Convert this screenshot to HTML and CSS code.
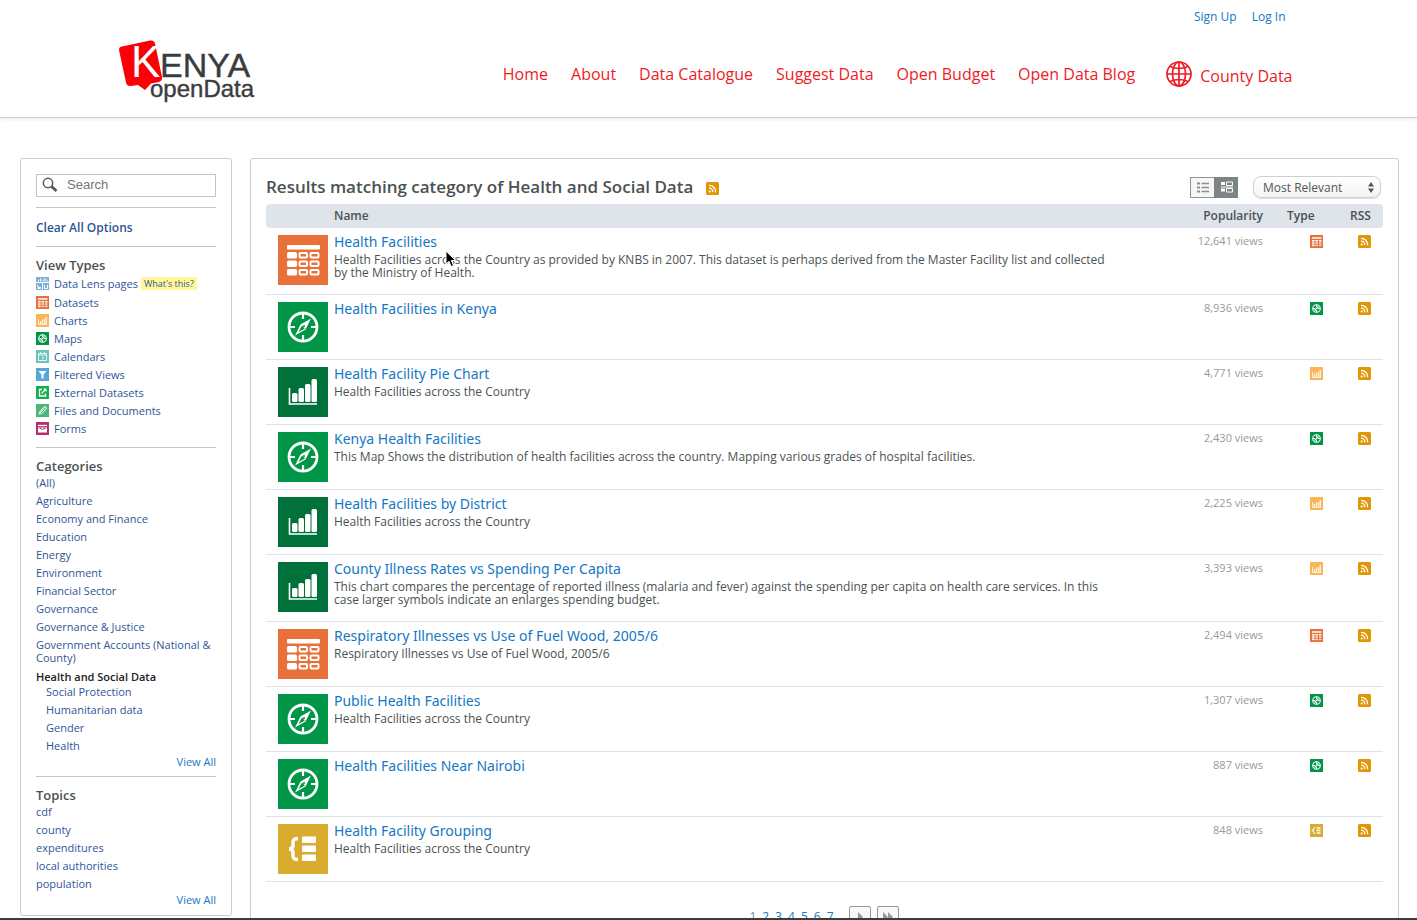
FILE: index.html
```html
<!DOCTYPE html>
<html lang="en">
<head>
<meta charset="utf-8">
<title>Kenya Open Data - Health and Social Data</title>
<link rel="stylesheet" href="styles.css">
</head>
<body>
<svg class="sprite" aria-hidden="true">
  <symbol id="table" viewBox="0 0 50 50"><rect width="50" height="50" fill="#e87039"/><g fill="#fff"><rect x="9" y="10" width="33" height="4.500" rx="1"/><rect x="9" y="17" width="10" height="6.500" rx="1.500"/><rect x="9" y="25.500" width="10" height="6.500" rx="1.500"/><rect x="9" y="34" width="10" height="6.500" rx="1.500"/></g><g fill="none" stroke="#fff" stroke-width="2"><rect x="21.500" y="18" width="7.500" height="4.500" rx="1"/><rect x="32.500" y="18" width="8" height="4.500" rx="1"/><rect x="21.500" y="26.500" width="7.500" height="4.500" rx="1"/><rect x="32.500" y="26.500" width="8" height="4.500" rx="1"/><rect x="21.500" y="35" width="7.500" height="4.500" rx="1"/><rect x="32.500" y="35" width="8" height="4.500" rx="1"/></g></symbol>
  <symbol id="compass" viewBox="0 0 50 50"><rect width="50" height="50" fill="#009547"/><circle cx="25" cy="25" r="14" fill="none" stroke="#fff" stroke-width="2.800"/><path d="M25 11v6M25 33v6M11 25h6M33 25h6" stroke="#fff" stroke-width="2.200"/><path d="M33 16.500L27.500 27.500 17 33.500 22.500 22.500z" fill="#fff"/><path d="M24 23.500l3 3-6.500 3.600z" fill="#009547"/><circle cx="26" cy="24" r="1" fill="#009547"/></symbol>
  <symbol id="bars" viewBox="0 0 50 50"><rect width="50" height="50" fill="#00713b"/><path d="M11.500 21v16h27.500" fill="none" stroke="#fff" stroke-width="1.600"/><g fill="#fff"><rect x="14" y="26" width="5.500" height="9" rx="1.500"/><rect x="20.500" y="21" width="5.500" height="14" rx="1.500"/><rect x="27" y="17" width="5.500" height="18" rx="1.500"/><rect x="33.500" y="12" width="5.500" height="23" rx="1.500"/></g></symbol>
  <symbol id="group" viewBox="0 0 50 50"><rect width="50" height="50" fill="#d9ab2f"/><path d="M20 14.500c-4 0-5 1-5 4v2.500c0 2.500-1 4-4 4 3 0 4 1.500 4 4v2.500c0 3 1 4 5 4" fill="none" stroke="#fff" stroke-width="3.500"/><g fill="#fff"><rect x="24" y="12.500" width="14" height="6.500" rx="1"/><rect x="24" y="21.500" width="14" height="6.500" rx="1"/><rect x="24" y="30.500" width="14" height="6.500" rx="1"/></g></symbol>
  <symbol id="s-lens" viewBox="0 0 13 13"><rect width="13" height="13" fill="#7fb0d4"/><path d="M0 5.500h13M6.500 6v7" stroke="#fff"/><path d="M2.500 2.500v2M4.500 1.500v3M7 2.500v2M9 1v3.500M11 2.500v2" stroke="#fff"/><path d="M1.500 8l1 3 1.500-1 1 1.500M1.500 11.500h3" stroke="#fff" fill="none"/><path d="M8.500 8v3.500h3V8" stroke="#fff" fill="none"/></symbol>
  <symbol id="s-table" viewBox="0 0 13 13"><rect width="13" height="13" fill="#e87039"/><path d="M2 3h9.500" stroke="#fff" stroke-width="1.500"/><g fill="#fff"><rect x="2" y="5" width="2.600" height="1.500"/><rect x="5.400" y="5" width="2.600" height="1.500"/><rect x="8.900" y="5" width="2.600" height="1.500"/><rect x="2" y="7.300" width="2.600" height="1.500"/><rect x="2" y="9.600" width="2.600" height="1.500"/></g><g fill="#fff" opacity=".75"><rect x="5.400" y="7.300" width="2.600" height="1.500"/><rect x="8.900" y="7.300" width="2.600" height="1.500"/><rect x="5.400" y="9.600" width="2.600" height="1.500"/><rect x="8.900" y="9.600" width="2.600" height="1.500"/></g></symbol>
  <symbol id="s-chart" viewBox="0 0 13 13"><rect width="13" height="13" fill="#f9b557"/><path d="M2.500 5v5.500h8.500" stroke="#fff" fill="none" opacity=".8"/><path d="M4.500 7v3M6.500 5.500v4.500M8.500 5v5M10.300 3v7" stroke="#fff" stroke-width="1.300" opacity=".85"/></symbol>
  <symbol id="s-map" viewBox="0 0 13 13"><rect width="13" height="13" fill="#009547"/><circle cx="6.500" cy="6.500" r="3.800" fill="none" stroke="#fff" stroke-width="1.100"/><path d="M6.500 3v2M6.500 8v2M3 6.500h2M8 6.500h2" stroke="#fff"/><path d="M8.500 4.500l-4 4" stroke="#fff" stroke-width="1.200"/></symbol>
  <symbol id="s-cal" viewBox="0 0 13 13"><rect width="13" height="13" fill="#69c4bb"/><path d="M2.500 3.500h8v7h-8zM2.500 5h8M4.500 2v2M8.500 2v2M6 7h1v2.500" stroke="#fff" fill="none" opacity=".85"/></symbol>
  <symbol id="s-filter" viewBox="0 0 13 13"><rect width="13" height="13" fill="#54a7d8"/><path d="M2.500 3h8L7.500 6.800V10.500H5.500V6.800z" fill="#fff"/></symbol>
  <symbol id="s-ext" viewBox="0 0 13 13"><rect width="13" height="13" fill="#16ad50"/><path d="M6 3.500H3.500v6.500h6V7.500M5.500 7.500l4-4" stroke="#fff" stroke-width="1.300" fill="none"/><path d="M7 2.500h3.500V6z" fill="#fff"/></symbol>
  <symbol id="s-file" viewBox="0 0 13 13"><rect width="13" height="13" fill="#4bb877"/><path d="M3 10.500l1-3 4-4.500c1.500-1 3 .5 2 2L6 9.500c-1 .7-2 0-1.500-1l3.500-4" stroke="#fff" fill="none"/></symbol>
  <symbol id="s-form" viewBox="0 0 13 13"><rect width="13" height="13" fill="#b92d6e"/><path d="M2 3.500h9" stroke="#fff" stroke-width="1.300"/><rect x="2" y="5.500" width="9" height="5" fill="#fff"/><path d="M3.500 6.500h1.500l1.500 1 1.500-1h1.500" stroke="#b92d6e" fill="none"/></symbol>
  <symbol id="s-group" viewBox="0 0 13 13"><rect width="13" height="13" fill="#d9ab2f"/><path d="M5 3.500C3.500 3.500 4 6 2.500 6.500 4 7 3.500 9.500 5 9.500" stroke="#fff" stroke-width="1.200" fill="none"/><path d="M6.500 4h4M6.500 6.500h4M6.500 9h4" stroke="#fff" stroke-width="1.500"/></symbol>
  <symbol id="rss" viewBox="0 0 13 13"><rect width="13" height="13" rx="1.500" fill="#e09607"/><circle cx="3.700" cy="9.500" r="1.100" fill="#fff"/><path d="M3 6.200c2.200 0 3.800 1.600 3.800 4M3 3.300c4 0 6.700 2.900 6.700 6.900" stroke="#fff" stroke-width="1.300" fill="none"/></symbol>
</svg>

<header class="site-header">
  <div class="header-inner">
    <div class="account"><a href="#">Sign Up</a><a href="#">Log In</a></div>
    <div class="header-row">
      <a href="#" class="logo" aria-label="Kenya openData">
        <svg width="140" height="68" viewBox="0 0 140 68">
          <path d="M3 6.500L31 .6q4-.8 5 3L43 37q.6 4-3 5l-8 1.500-6 6.500-7-5-7 1q-4 .6-5-3.500L.2 11q-.8-4 2.800-4.500z" fill="#fb0007"/>
          <g font-family="Liberation Sans, sans-serif">
            <text x="12" y="37" font-size="44" fill="#fff">K</text>
            <text x="41" y="37" font-size="34" fill="#3b3c3e" stroke="#3b3c3e" stroke-width=".4">ENYA</text>
            <text x="31" y="57" font-size="24" fill="#3b3c3e" stroke="#3b3c3e" stroke-width=".4">openData</text>
          </g>
        </svg>
      </a>
      <nav class="main-nav">
        <a href="#">Home</a><a href="#">About</a><a href="#">Data Catalogue</a><a href="#">Suggest Data</a><a href="#">Open Budget</a><a href="#">Open Data Blog</a>
        <a href="#" class="county"><svg width="26" height="26" viewBox="0 0 26 26" fill="none" stroke="#ed1c24" stroke-width="1.700"><circle cx="13" cy="13" r="12"/><ellipse cx="13" cy="13" rx="6.500" ry="12"/><path d="M13 1v24M1 13h24M4 5.500q9 4 18 0M4 20.500q9-4 18 0"/></svg><span>County Data</span></a>
      </nav>
    </div>
  </div>
</header>

<div class="page">
  <aside class="sidebar panel">
    <form class="search">
      <svg width="18" height="16" viewBox="0 0 18 16"><circle cx="6" cy="6" r="4.700" fill="none" stroke="#555" stroke-width="1.500"/><path d="M9.500 9.500l5 4.500" stroke="#555" stroke-width="2.800"/></svg>
      <input type="search" placeholder="Search" aria-label="Search">
    </form>
    <a href="#" class="clear">Clear All Options</a>
    <section class="facet">
      <h2>View Types</h2>
      <ul class="types">
        <li><a href="#"><svg><use href="#s-lens"/></svg>Data Lens pages</a> <a href="#" class="what">What's this?</a></li>
        <li><a href="#"><svg><use href="#s-table"/></svg>Datasets</a></li>
        <li><a href="#"><svg><use href="#s-chart"/></svg>Charts</a></li>
        <li><a href="#"><svg><use href="#s-map"/></svg>Maps</a></li>
        <li><a href="#"><svg><use href="#s-cal"/></svg>Calendars</a></li>
        <li><a href="#"><svg><use href="#s-filter"/></svg>Filtered Views</a></li>
        <li><a href="#"><svg><use href="#s-ext"/></svg>External Datasets</a></li>
        <li><a href="#"><svg><use href="#s-file"/></svg>Files and Documents</a></li>
        <li><a href="#"><svg><use href="#s-form"/></svg>Forms</a></li>
      </ul>
    </section>
    <section class="facet">
      <h2>Categories</h2>
      <ul>
        <li><a href="#">(All)</a></li>
        <li><a href="#">Agriculture</a></li>
        <li><a href="#">Economy and Finance</a></li>
        <li><a href="#">Education</a></li>
        <li><a href="#">Energy</a></li>
        <li><a href="#">Environment</a></li>
        <li><a href="#">Financial Sector</a></li>
        <li><a href="#">Governance</a></li>
        <li><a href="#">Governance &amp; Justice</a></li>
        <li><a href="#">Government Accounts (National &amp; County)</a></li>
        <li class="current"><a href="#">Health and Social Data</a></li>
        <li class="sub"><a href="#">Social Protection</a></li>
        <li class="sub"><a href="#">Humanitarian data</a></li>
        <li class="sub"><a href="#">Gender</a></li>
        <li class="sub"><a href="#">Health</a></li>
      </ul>
      <a href="#" class="view-all">View All</a>
    </section>
    <section class="facet">
      <h2>Topics</h2>
      <ul>
        <li><a href="#">cdf</a></li>
        <li><a href="#">county</a></li>
        <li><a href="#">expenditures</a></li>
        <li><a href="#">local authorities</a></li>
        <li><a href="#">population</a></li>
      </ul>
      <a href="#" class="view-all">View All</a>
    </section>
  </aside>

  <main class="results panel">
    <div class="results-head">
      <h1>Results matching category of Health and Social Data</h1>
      <a href="#" class="head-feed" aria-label="RSS"><svg class="small"><use href="#rss"/></svg></a>
      <div class="view-toggle">
        <button type="button" aria-label="List view"><svg width="12" height="11" viewBox="0 0 12 11" stroke="#8b8f8f"><path d="M0 1.500h3M0 5.500h3M0 9.500h3" stroke-width="2"/><path d="M4.500 1.500H12M4.500 5.500H12M4.500 9.500H12" stroke-width="1.500"/></svg></button>
        <button type="button" class="on" aria-label="Rich view"><svg width="12" height="12" viewBox="0 0 12 12" fill="none" stroke="#fff"><path d="M0 2.500h4M0 9h4" stroke-width="3"/><path d="M5.500 1h6v3.500h-6zM5.500 7.500h6V11h-6zM0 6h12"/></svg></button>
      </div>
      <div class="sort">
        <select aria-label="Sort by"><option>Most Relevant</option><option>Most Accessed</option><option>Alphabetical</option></select>
        <svg width="8" height="11" viewBox="0 0 8 11" fill="#555"><path d="M4 0l3 4.500H1zM4 11L1 6.500h6z"/></svg>
      </div>
    </div>
    <table>
      <thead><tr><th class="thumb"></th><th class="name">Name</th><th class="pop">Popularity</th><th class="type">Type</th><th class="feed">RSS</th></tr></thead>
      <tbody>
        <tr><td class="thumb"><svg><use href="#table"/></svg></td><td class="name"><a href="#">Health Facilities</a><p>Health Facilities across the Country as provided by KNBS in 2007. This dataset is perhaps derived from the Master Facility list and collected by the Ministry of Health.</p></td><td class="pop">12,641 views</td><td class="type"><svg class="small"><use href="#s-table"/></svg></td><td class="feed"><a href="#" aria-label="RSS"><svg class="small"><use href="#rss"/></svg></a></td></tr>
        <tr><td class="thumb"><svg><use href="#compass"/></svg></td><td class="name"><a href="#">Health Facilities in Kenya</a></td><td class="pop">8,936 views</td><td class="type"><svg class="small"><use href="#s-map"/></svg></td><td class="feed"><a href="#" aria-label="RSS"><svg class="small"><use href="#rss"/></svg></a></td></tr>
        <tr><td class="thumb"><svg><use href="#bars"/></svg></td><td class="name"><a href="#">Health Facility Pie Chart</a><p>Health Facilities across the Country</p></td><td class="pop">4,771 views</td><td class="type"><svg class="small"><use href="#s-chart"/></svg></td><td class="feed"><a href="#" aria-label="RSS"><svg class="small"><use href="#rss"/></svg></a></td></tr>
        <tr><td class="thumb"><svg><use href="#compass"/></svg></td><td class="name"><a href="#">Kenya Health Facilities</a><p>This Map Shows the distribution of health facilities across the country. Mapping various grades of hospital facilities.</p></td><td class="pop">2,430 views</td><td class="type"><svg class="small"><use href="#s-map"/></svg></td><td class="feed"><a href="#" aria-label="RSS"><svg class="small"><use href="#rss"/></svg></a></td></tr>
        <tr><td class="thumb"><svg><use href="#bars"/></svg></td><td class="name"><a href="#">Health Facilities by District</a><p>Health Facilities across the Country</p></td><td class="pop">2,225 views</td><td class="type"><svg class="small"><use href="#s-chart"/></svg></td><td class="feed"><a href="#" aria-label="RSS"><svg class="small"><use href="#rss"/></svg></a></td></tr>
        <tr><td class="thumb"><svg><use href="#bars"/></svg></td><td class="name"><a href="#">County Illness Rates vs Spending Per Capita</a><p>This chart compares the percentage of reported illness (malaria and fever) against the spending per capita on health care services. In this case larger symbols indicate an enlarges spending budget.</p></td><td class="pop">3,393 views</td><td class="type"><svg class="small"><use href="#s-chart"/></svg></td><td class="feed"><a href="#" aria-label="RSS"><svg class="small"><use href="#rss"/></svg></a></td></tr>
        <tr><td class="thumb"><svg><use href="#table"/></svg></td><td class="name"><a href="#">Respiratory Illnesses vs Use of Fuel Wood, 2005/6</a><p>Respiratory Illnesses vs Use of Fuel Wood, 2005/6</p></td><td class="pop">2,494 views</td><td class="type"><svg class="small"><use href="#s-table"/></svg></td><td class="feed"><a href="#" aria-label="RSS"><svg class="small"><use href="#rss"/></svg></a></td></tr>
        <tr><td class="thumb"><svg><use href="#compass"/></svg></td><td class="name"><a href="#">Public Health Facilities</a><p>Health Facilities across the Country</p></td><td class="pop">1,307 views</td><td class="type"><svg class="small"><use href="#s-map"/></svg></td><td class="feed"><a href="#" aria-label="RSS"><svg class="small"><use href="#rss"/></svg></a></td></tr>
        <tr><td class="thumb"><svg><use href="#compass"/></svg></td><td class="name"><a href="#">Health Facilities Near Nairobi</a></td><td class="pop">887 views</td><td class="type"><svg class="small"><use href="#s-map"/></svg></td><td class="feed"><a href="#" aria-label="RSS"><svg class="small"><use href="#rss"/></svg></a></td></tr>
        <tr><td class="thumb"><svg><use href="#group"/></svg></td><td class="name"><a href="#">Health Facility Grouping</a><p>Health Facilities across the Country</p></td><td class="pop">848 views</td><td class="type"><svg class="small"><use href="#s-group"/></svg></td><td class="feed"><a href="#" aria-label="RSS"><svg class="small"><use href="#rss"/></svg></a></td></tr>
      </tbody>
    </table>
    <nav class="pager" aria-label="Pages">
      <span>1</span><a href="#">2</a><a href="#">3</a><a href="#">4</a><a href="#">5</a><a href="#">6</a><a href="#">7</a>
      <button type="button" aria-label="Next"><svg width="10" height="10" viewBox="0 0 10 10"><path d="M3 0l5 5-5 5z" fill="#9a9a9a"/></svg></button>
      <button type="button" aria-label="Last"><svg width="10" height="10" viewBox="0 0 10 10"><path d="M0 0l5 5-5 5zM5 0l5 5-5 5z" fill="#9a9a9a"/></svg></button>
    </nav>
  </main>
</div>
<svg class="pointer" width="12" height="19" viewBox="0 0 12 19"><path d="M1 1v13l3-2.700 2 5.200 2.500-1-2.200-5H10.500z" fill="#000" stroke="#fff"/></svg>
<div class="window-edge"></div>
</body>
</html>
```
FILE: styles.css
```css
* { box-sizing: border-box; }
body {
  margin: 0;
  height: 100vh;
  overflow: hidden;
  position: relative;
  background: #fff;
  color: #4a5252;
  font: 12px/13px "Open Sans", sans-serif;
}
a { color: #1478c4; text-decoration: none; }
h1, h2, p, ul { margin: 0; padding: 0; }
ul { list-style: none; }
button { padding: 0; font: inherit; }
svg { display: block; flex: none; }
.sprite { display: none; }
.small { width: 13px; height: 13px; }

.site-header {
  border-bottom: 1px solid #c9cdd0;
  box-shadow: 0 2px 3px #edf0f0;
}
.header-inner { max-width: 1180px; height: 117px; margin: 0 auto; }
.account {
  display: flex;
  justify-content: flex-end;
  gap: 15px;
  padding: 8px 13px 0 0;
  line-height: 18px;
}
.header-row {
  display: flex;
  justify-content: space-between;
  padding: 14px 6px 0 0;
}
.main-nav { display: flex; gap: 23px; padding-top: 20px; height: 50px; align-items: flex-start; }
.main-nav a { color: #ed1c24; font-size: 16px; line-height: 28px; white-space: nowrap; }
.main-nav .county { display: flex; align-items: center; gap: 8px; margin-left: 8px; }
.county span { padding-top: 2px; }
.county svg { margin-top: -2px; }

.page { display: flex; align-items: flex-start; gap: 18px; padding: 40px 18px 0 20px; }
.panel { border: 1px solid #ccc; border-radius: 3px; padding: 15px; }
.sidebar { width: 212px; flex: none; padding-bottom: 9px; }
.sidebar a { color: #2f5597; }
.search {
  display: flex;
  align-items: center;
  height: 23px;
  margin-bottom: 10px;
  padding-left: 5px;
  border: 1px solid #c4c4c4;
}
.search svg { margin-bottom: 2px; }
.search input {
  flex: 1;
  min-width: 0;
  margin-left: 7px;
  margin-bottom: 2px;
  padding: 0;
  border: 0;
  outline: 0;
  background: none;
  font: 13px/18px "Liberation Sans", Arial, sans-serif;
}
.search input::placeholder { color: #757575; }
.sidebar .clear {
  display: block;
  padding: 11px 0 9px;
  border-top: 1px solid #c4c4c4;
  font-weight: 600;
  line-height: 18px;
}
.facet { padding: 10px 0 8px; border-top: 1px solid #c4c4c4; font-size: 11px; }
.facet:last-child { padding-bottom: 0; }
.facet h2 { font-size: 13px; line-height: 16px; font-weight: 600; }
.facet li { padding: 2px 0 3px; }
.facet .types { padding-bottom: 1px; }
.types li { display: flex; align-items: center; gap: 3px; }
.types li:first-child { padding: 4px 0; }
.types a { display: flex; align-items: center; gap: 5px; }
.types svg { width: 13px; height: 13px; }
.types .what { padding: 0 3px; background: #fff799; font-size: 9px; }
.facet .current { padding: 3px 0 0; font-weight: 600; }
.facet .current a { color: #222; }
.facet .sub { padding-left: 10px; }
.sidebar .view-all { display: block; text-align: right; line-height: 13px; color: #1478c4; }

.results { flex: 1; min-width: 0; }
.results-head { display: flex; align-items: center; height: 30px; padding-right: 2px; }
.results-head h1 { font-size: 17px; line-height: 24px; font-weight: 600; margin: 0 13px 4px 0; }
.head-feed { margin-bottom: 2px; }
.view-toggle { display: flex; margin: 0 15px 4px auto; }
.view-toggle button {
  display: grid;
  place-items: center;
  width: 24px;
  height: 21px;
  border: 1px solid #8f9595;
  border-right: 0;
  background: #f6f6f6;
}
.view-toggle .on { background: #7e8484; border-color: #7e8484; }
.sort { display: flex; align-items: center; position: relative; margin-bottom: 4px; }
.sort select {
  appearance: none;
  width: 128px;
  height: 22px;
  padding: 0 9px;
  border: 1px solid #ccd2d2;
  border-radius: 8px;
  background: linear-gradient(#fff, #f4f4f4);
  box-shadow: 0 1px 1px #ddd;
  color: #555;
  font: 12px "Open Sans", sans-serif;
}
.sort svg { position: absolute; right: 6px; pointer-events: none; }

table { width: 100%; border-collapse: separate; border-spacing: 0; table-layout: fixed; }
th, td { padding: 0; text-align: left; vertical-align: top; }
th { height: 24px; background: #dfe3ea; line-height: 23px; font-weight: 600; }
th:first-child { border-radius: 4px 0 0 4px; }
th:last-child { border-radius: 0 4px 4px 0; }
td { border-bottom: 1px solid #dfe2e7; }
.thumb { width: 68px; }
td.thumb { padding: 7px 0 7px 12px; }
.thumb svg { width: 50px; height: 50px; }
td.name { padding: 5px 50px 15px 0; }
td.name a { display: block; font: 14px/18px "Noto Sans", sans-serif; margin-bottom: 2px; }
.pop { width: 120px; padding-right: 24px; text-align: right; }
td.pop { padding-top: 6px; color: #999; font-size: 11px; }
.type { width: 63px; }
td.type { padding: 7px 0 0 23px; }
.feed { width: 33px; }
td.feed { padding: 7px 0 0 8px; }

.pager { display: flex; justify-content: center; align-items: center; gap: 6px; padding: 24px 1px 0 0; color: #888; }
.pager > span, .pager > a { padding-bottom: 2px; }
.pager button {
  display: grid;
  place-items: center;
  width: 22px;
  height: 22px;
  border: 1px solid #999;
  border-radius: 2px;
  background: #f8f8f8;
}
.pager a + button { margin-left: 9px; }

.pointer { position: absolute; left: 445px; top: 250px; }
.window-edge { position: absolute; left: 0; right: 0; bottom: 0; height: 2px; background: #3d3a3a; }
```
